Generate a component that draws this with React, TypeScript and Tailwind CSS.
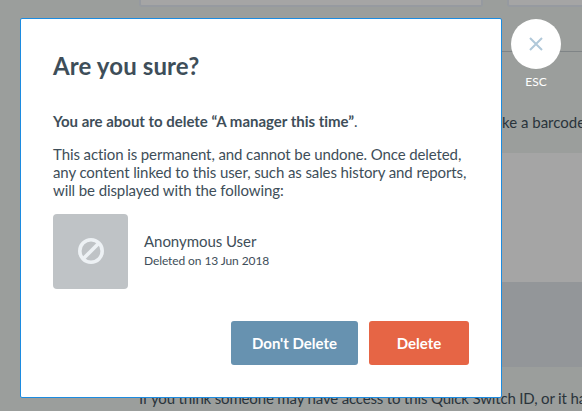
import React from "react";

function PageBehind() {
  return (
    <div className="flex h-[411px] w-[582px] flex-col overflow-hidden whitespace-nowrap bg-[#9b9e9c] text-[15px] leading-5 text-[#2a343b]">
      <div className="flex h-[51px] shrink-0 gap-6 pl-[139px]">
        <div className="h-[7px] w-[344px] shrink-0 rounded-b-[3px] border-2 border-t-0 border-[#969aa0] bg-[#a5a5a5]" />
        <div className="h-[7px] w-[344px] shrink-0 rounded-b-[3px] border-2 border-t-0 border-[#969aa0] bg-[#a5a5a5]" />
      </div>
      <div className="ml-[139px] h-px shrink-0 bg-[#7f8486]" />
      <div className="h-[101px] shrink-0 pl-[502px] pt-[60px]">ke a barcode</div>
      <div className="ml-[139px] h-[129px] shrink-0 bg-[#a5a5a5]" />
      <div className="ml-[139px] h-[85px] shrink-0 bg-[#939699]" />
      <div className="pl-[139px] pt-[21px] tracking-[-0.16px]">
        If you think someone may have access to this Quick Switch ID, or it ha
      </div>
    </div>
  );
}

function CloseButton() {
  return (
    <div className="ml-[9px] mt-px flex w-[50px] flex-col items-center">
      <button aria-label="Close" className="flex size-[50px] items-center justify-center rounded-full bg-white">
        <svg width="14" height="14" viewBox="0 0 14 14" fill="none" stroke="#b0c8d9" strokeWidth="2">
          <path d="M1 1l12 12M13 1L1 13" />
        </svg>
      </button>
      <span className="mt-1 text-[12px] leading-[18px] text-white">ESC</span>
    </div>
  );
}

function Dialog() {
  return (
    <div
      role="dialog"
      className="flex h-[380px] w-[482px] shrink-0 flex-col rounded-[2px] border border-[#1c8be0] bg-white px-8 text-[#3e4e59]"
    >
      <h1 className="mt-[31px] text-[24px] font-bold leading-8 tracking-[0.13px]">Are you sure?</h1>
      <p className="mt-[30px] text-[15px] leading-[18px] tracking-[-0.02px]">
        <strong>You are about to delete “A manager this time”</strong>.
      </p>
      <p className="mt-[15px] whitespace-nowrap text-[15px] leading-[18px] tracking-[-0.1px]">
        This action is permanent, and cannot be undone. Once deleted,
        <br />
        any content linked to this user, such as sales history and reports,
        <br />
        will be displayed with the following:
      </p>
      <div className="mt-[15px] flex items-center gap-4">
        <div className="flex size-[75px] items-center justify-center rounded-[4px] bg-[#bfc3c6] pb-[2px]">
          <svg width="26" height="26" viewBox="0 0 26 26" fill="none" stroke="#edf1f4" strokeWidth="3.6">
            <circle cx="13" cy="13" r="11.2" />
            <path d="M5.2 20.8L20.8 5.2" />
          </svg>
        </div>
        <div className="pb-[2px]">
          <div className="text-[15px] leading-5 tracking-[-0.05px]">Anonymous User</div>
          <div className="text-[12px] leading-[19px] tracking-[-0.1px]">Deleted on 13 Jun 2018</div>
        </div>
      </div>
      <div className="mt-8 flex justify-end gap-[11px] text-[15px] font-bold text-white">
        <button className="h-11 w-[127px] rounded-[3px] bg-[#6792b0]">Don't Delete</button>
        <button className="h-11 w-[100px] rounded-[3px] bg-[#e66545]">Delete</button>
      </div>
    </div>
  );
}

export default function App() {
  return (
    <div className="relative h-[411px] w-[582px] overflow-hidden font-['Lato',sans-serif] [font-variant-ligatures:none]">
      <PageBehind />
      <div className="absolute inset-0 flex items-start pl-5 pt-[18px]">
        <Dialog />
        <CloseButton />
      </div>
    </div>
  );
}
